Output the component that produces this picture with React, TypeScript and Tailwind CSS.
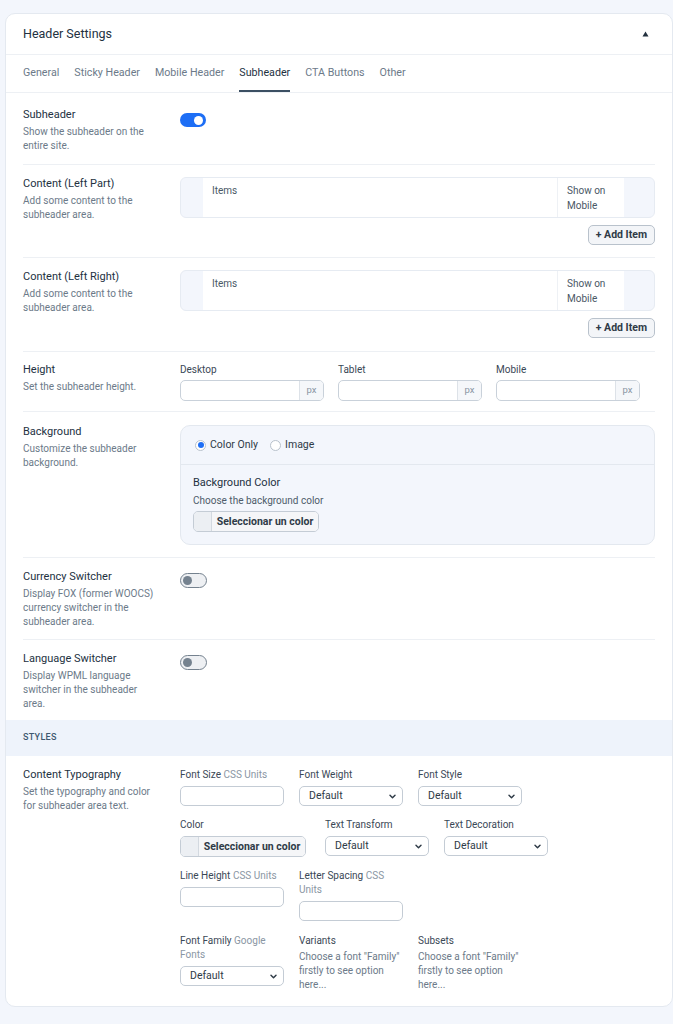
import React from "react";

const TITLE = "text-[11px] leading-[14px] text-[#23313f]";
const DESC = "text-[10px] leading-[14px] text-[#6c7a89]";
const LABEL = "text-[10px] leading-[14px] text-[#3a4856]";

function Row({
  title,
  desc,
  children,
  className = "",
  border = true,
}: {
  title: string;
  desc: string;
  children?: React.ReactNode;
  className?: string;
  border?: boolean;
}) {
  return (
    <div className={`flex ${border ? "border-b border-[#edf0f4]" : ""} ${className}`}>
      <div className="w-[157px] shrink-0 pr-[20px]">
        <div className={TITLE}>{title}</div>
        <div className={`${DESC} mt-[3px]`}>{desc}</div>
      </div>
      <div className="flex-1">{children}</div>
    </div>
  );
}

function Toggle({ on }: { on: boolean }) {
  if (on) {
    return (
      <div className="w-[26px] h-[14px] rounded-full bg-[#1d6ef5] flex items-center justify-end pr-[3px]">
        <div className="w-[9px] h-[9px] rounded-full bg-white" />
      </div>
    );
  }
  return (
    <div className="w-[27px] h-[15px] rounded-full bg-[#eef0f3] border-[1.5px] border-[#75828f] flex items-center pl-[2px]">
      <div className="w-[9px] h-[9px] rounded-full bg-[#75828f]" />
    </div>
  );
}

function ItemsBox() {
  return (
    <div>
      <div className="flex h-[41px] rounded-[6px] border border-[#e6ebf2] bg-[#f3f6fc] overflow-hidden">
        <div className="w-[22px]" />
        <div className="flex-1 bg-white px-[9px] pt-[6px] text-[10px] leading-[14px] text-[#4a5866]">Items</div>
        <div className="w-[67px] bg-white border-l border-[#eef1f5] px-[9px] pt-[5px] text-[10px] leading-[15px] text-[#4a5866]">
          Show on
          <br />
          Mobile
        </div>
        <div className="w-[30px]" />
      </div>
      <div className="flex justify-end mt-[7px]">
        <button className="h-[20px] px-[7px] rounded-[5px] border border-[#b9c2cc] bg-[#f3f5f8] text-[10.5px] font-bold text-[#2f3b47] leading-none">
          + Add Item
        </button>
      </div>
    </div>
  );
}

function PxInput({ label }: { label: string }) {
  return (
    <div className="w-[144px]">
      <div className={LABEL}>{label}</div>
      <div className="mt-[3px] h-[21px] flex rounded-[5px] border border-[#c9d1da] bg-white overflow-hidden">
        <div className="flex-1" />
        <div className="w-[24px] border-l border-[#dde2e8] bg-[#f5f7fa] flex items-center justify-center text-[9.5px] text-[#8a96a3]">
          px
        </div>
      </div>
    </div>
  );
}

function Radio({ checked, label }: { checked: boolean; label: string }) {
  return (
    <div className="flex items-center gap-[4px]">
      <div className="w-[11px] h-[11px] rounded-full border border-[#b9c2cc] bg-white flex items-center justify-center">
        {checked && <div className="w-[6px] h-[6px] rounded-full bg-[#1d6ef5]" />}
      </div>
      <span className="text-[10.5px] text-[#2f3b47]">{label}</span>
    </div>
  );
}

function ColorButton({ width }: { width: string }) {
  return (
    <div className={`h-[21px] flex rounded-[5px] border border-[#c4ccd5] overflow-hidden ${width}`}>
      <div className="w-[18px] bg-[#eceff3] border-r border-[#d3d9e0]" />
      <div className="flex-1 bg-[#f5f6f8] flex items-center justify-center text-[10.5px] font-bold text-[#2f3b47]">
        Seleccionar un color
      </div>
    </div>
  );
}

function Select() {
  return (
    <div className="h-[20px] w-[104px] border border-[#c4ccd5] rounded-[5px] bg-white flex items-center justify-between pl-[9px] pr-[6px] text-[10.5px] text-[#2f3b47]">
      <span>Default</span>
      <svg width="7" height="5" viewBox="0 0 8 6" fill="none">
        <path d="M1 1.5 L4 4.5 L7 1.5" stroke="#2f3b47" strokeWidth="1.7" strokeLinecap="round" strokeLinejoin="round" />
      </svg>
    </div>
  );
}

function TextInput() {
  return <div className="h-[20px] w-[104px] border border-[#c4ccd5] rounded-[5px] bg-white" />;
}

function Field({ label, sub = [], children, w = "w-[104px]" }: { label: string; sub?: string[]; children: React.ReactNode; w?: string }) {
  return (
    <div className={w}>
      <div className={LABEL}>
        {label}
        {sub.map((s) => (
          <React.Fragment key={s}>
            {" "}
            <span className="text-[#8a96a3]">{s}</span>
          </React.Fragment>
        ))}
      </div>
      <div className="mt-[4px]">{children}</div>
    </div>
  );
}

export default function App() {
  const tabs = ["General", "Sticky Header", "Mobile Header", "Subheader", "CTA Buttons", "Other"];
  return (
    <div className="min-h-screen bg-[#f3f6fc] pt-[13px] pl-[5px] pb-[18px] font-['Roboto',sans-serif]">
      <div className="w-[668px] bg-white rounded-[10px] border border-[#e4e9f0] overflow-hidden">
        {/* header */}
        <div className="h-[41px] px-[17px] flex items-center justify-between border-b border-[#edf0f4]">
          <span className="text-[12.5px] text-[#23313f]">Header Settings</span>
          <svg width="7" height="6" viewBox="0 0 7 6" className="mr-[6px]">
            <path d="M3.5 0.5 L6.5 5.5 L0.5 5.5 Z" fill="#23313f" />
          </svg>
        </div>
        {/* tabs */}
        <div className="h-[38px] px-[17px] flex items-stretch gap-[15px] border-b border-[#edf0f4]">
          {tabs.map((t) => (
            <div
              key={t}
              className={`flex items-center pt-[1px] text-[10.7px] whitespace-nowrap border-b-2 ${
                t === "Subheader" ? "border-[#3b4f63] text-[#23313f]" : "border-transparent text-[#6c7a89]"
              }`}
            >
              {t}
            </div>
          ))}
        </div>

        <div className="px-[17px]">
          <Row title="Subheader" desc="Show the subheader on the entire site." className="pt-[15px] pb-[11px]">
            <div className="pt-[5px]">
              <Toggle on />
            </div>
          </Row>
          <Row title="Content (Left Part)" desc="Add some content to the subheader area." className="pt-[12px] pb-[12px]">
            <ItemsBox />
          </Row>
          <Row title="Content (Left Right)" desc="Add some content to the subheader area." className="pt-[12px] pb-[13px]">
            <ItemsBox />
          </Row>
          <Row title="Height" desc="Set the subheader height." className="pt-[11px] pb-[10px]">
            <div className="flex gap-[14px]">
              <PxInput label="Desktop" />
              <PxInput label="Tablet" />
              <PxInput label="Mobile" />
            </div>
          </Row>
          <Row title="Background" desc="Customize the subheader background." className="pt-[13px] pb-[12px]">
            <div className="rounded-[10px] border border-[#e3e8ef] bg-[#f3f6fc]">
              <div className="h-[39px] px-[14px] flex items-center gap-[12px] border-b border-[#e3e8ef]">
                <Radio checked label="Color Only" />
                <Radio checked={false} label="Image" />
              </div>
              <div className="px-[12px] pt-[11px] pb-[12px]">
                <div className="text-[11px] leading-[14px] text-[#23313f]">Background Color</div>
                <div className="text-[10px] leading-[14px] text-[#4e5c6a] mt-[4px]">Choose the background color</div>
                <div className="mt-[3px]">
                  <ColorButton width="w-[126px]" />
                </div>
              </div>
            </div>
          </Row>
          <Row title="Currency Switcher" desc="Display FOX (former WOOCS) currency switcher in the subheader area." className="pt-[12px] pb-[10px]">
            <div className="pt-[3px]">
              <Toggle on={false} />
            </div>
          </Row>
          <Row title="Language Switcher" desc="Display WPML language switcher in the subheader area." border={false} className="pt-[12px] pb-[9px]">
            <div className="pt-[3px]">
              <Toggle on={false} />
            </div>
          </Row>
        </div>

        {/* styles band */}
        <div className="h-[36px] px-[17px] bg-[#eef3fb] flex items-center text-[9px] font-medium tracking-[0.3px] text-[#3e5870]">
          STYLES
        </div>

        <div className="px-[17px]">
          <div className="flex pt-[12px] pb-[14px]">
            <div className="w-[157px] shrink-0 pr-[20px]">
              <div className={TITLE}>Content Typography</div>
              <div className={`${DESC} mt-[3px]`}>Set the typography and color for subheader area text.</div>
            </div>
            <div className="flex-1 flex flex-col gap-[12px]">
              <div className="flex gap-[15px]">
                <Field label="Font Size" sub={["CSS", "Units"]}>
                  <TextInput />
                </Field>
                <Field label="Font Weight">
                  <Select />
                </Field>
                <Field label="Font Style">
                  <Select />
                </Field>
              </div>
              <div className="flex gap-[15px]">
                <Field label="Color" w="w-[130px]">
                  <ColorButton width="w-[126px]" />
                </Field>
                <Field label="Text Transform">
                  <Select />
                </Field>
                <Field label="Text Decoration">
                  <Select />
                </Field>
              </div>
              <div className="flex gap-[15px]">
                <Field label="Line Height" sub={["CSS", "Units"]}>
                  <TextInput />
                </Field>
                <Field label="Letter Spacing" sub={["CSS", "Units"]}>
                  <TextInput />
                </Field>
              </div>
              <div className="flex gap-[15px] mt-[1px]">
                <Field label="Font Family" sub={["Google", "Fonts"]}>
                  <Select />
                </Field>
                <div className="w-[104px]">
                  <div className={LABEL}>Variants</div>
                  <div className={`${DESC} mt-[2px]`}>Choose a font "Family" firstly to see option here...</div>
                </div>
                <div className="w-[104px]">
                  <div className={LABEL}>Subsets</div>
                  <div className={`${DESC} mt-[2px]`}>Choose a font "Family" firstly to see option here...</div>
                </div>
              </div>
            </div>
          </div>
        </div>
      </div>
    </div>
  );
}
